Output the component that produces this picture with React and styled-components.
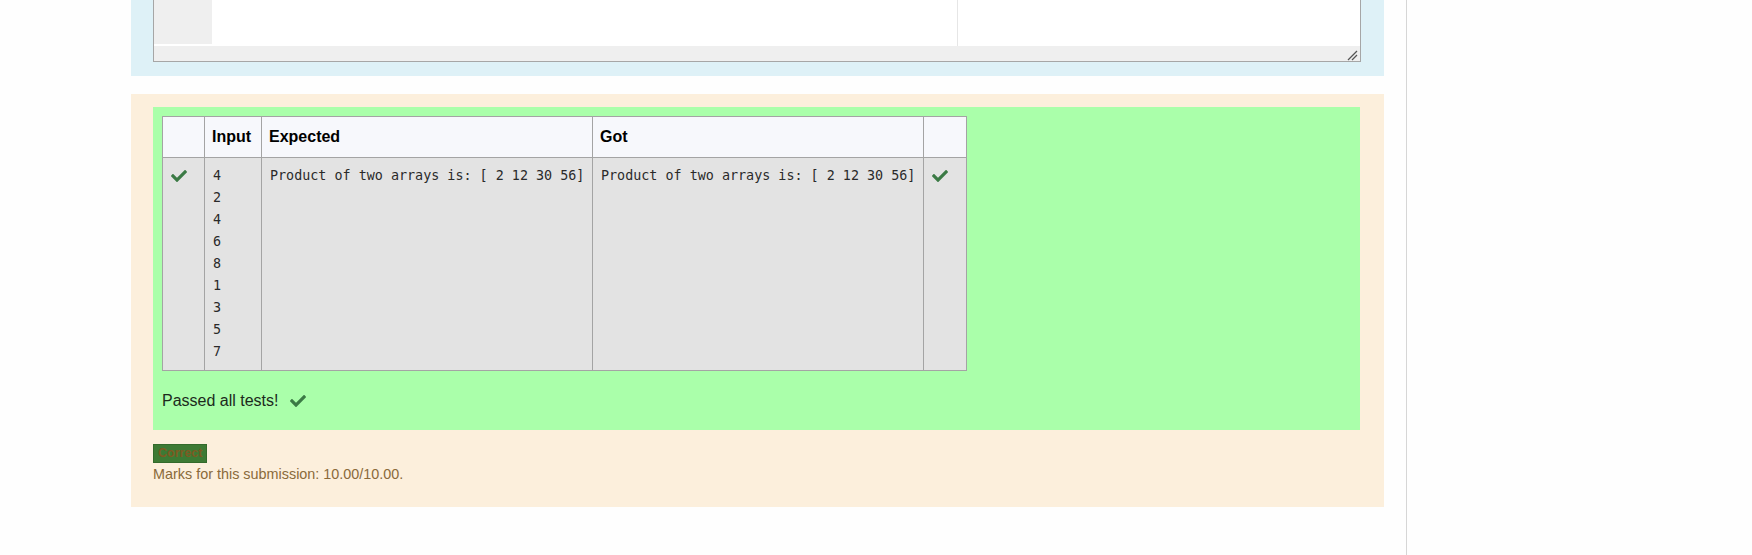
import React from 'react';
import styled, { createGlobalStyle } from 'styled-components';
import { FaCheck } from 'react-icons/fa';

const Global = createGlobalStyle`
  html, body {
    margin: 0;
    padding: 0;
    background: #fefefe;
    font-family: "Liberation Sans", Arial, sans-serif;
  }
`;

const Page = styled.div`
  display: flex;
  min-height: 555px;
  padding-left: 131px;
`;

const Main = styled.div`
  width: 1253px;
  flex-shrink: 0;
`;

const Sidebar = styled.div`
  margin-left: 22px;
  flex: 1;
  border-left: 1px solid #d6d6d6;
  min-height: 555px;
`;

const AnswerPanel = styled.div`
  background: #def1f7;
  padding: 0 23px 14px 22px;
`;

const Editor = styled.div`
  border: 1px solid #a6a6a6;
  border-top: none;
  background: #ffffff;
`;

const EditorBody = styled.div`
  display: flex;
  height: 46px;
`;

const Gutter = styled.div`
  width: 58px;
  height: 44px;
  background: #efefef;
`;

const Content = styled.div`
  flex: 1;
  display: flex;
`;

const PrintMargin = styled.div`
  width: 745px;
  border-right: 1px solid #e6e6e6;
`;

const ScrollBar = styled.div`
  height: 15px;
  background: #efefef;
  display: flex;
  justify-content: flex-end;
  align-items: flex-end;
  padding-right: 2px;
`;

const FeedbackPanel = styled.div`
  margin-top: 18px;
  background: #fcefdc;
  padding: 13px 24px 23px 22px;
`;

const ResultBox = styled.div`
  background: #aaffaa;
  padding: 9px 9px 17px 9px;
`;

const Table = styled.table`
  border-collapse: collapse;
  table-layout: fixed;
  width: 804px;
`;

const Th = styled.th`
  background: #f7f8fc;
  border: 1px solid #a4a4a4;
  padding: 10px 7px;
  height: 20px;
  line-height: 20px;
  text-align: left;
  font-size: 16px;
  font-weight: 700;
  color: #000;
`;

const Td = styled.td`
  background: #e3e3e3;
  border: 1px solid #a4a4a4;
  padding: 7px 7px 7px 8px;
  vertical-align: top;
  color: #2a2a2a;
  font-family: ${(p) => (p.$mono ? '"DejaVu Sans Mono", "Liberation Mono", monospace' : 'inherit')};
  font-size: 13.4px;
  line-height: 22px;
  white-space: pre;
`;

const Tick = styled(FaCheck)`
  color: #3b7a45;
  width: 16px;
  height: 16px;
  display: block;
  margin-top: 3px;
`;

const Passed = styled.div`
  margin-top: 18px;
  display: flex;
  align-items: center;
  gap: 11px;
  font-size: 16px;
  line-height: 24px;
  color: #1c2a1c;
`;

const InlineTick = styled(FaCheck)`
  color: #3b7a45;
  width: 16px;
  height: 16px;
`;

const Badge = styled.div`
  display: inline-block;
  margin-top: 14px;
  background: #3d7a34;
  border: 1px solid #336a2b;
  color: #7d5a22;
  font-size: 12.5px;
  font-weight: 700;
  line-height: 17px;
  padding: 0 4px;
`;

const Marks = styled.div`
  font-size: 14.4px;
  line-height: 20px;
  color: #8a6a3a;
  margin-top: 1px;
`;

const inputs = ['4', '2', '4', '6', '8', '1', '3', '5', '7'];
const output = 'Product of two arrays is: [ 2 12 30 56]';

const Grip = () => (
  <svg width="12" height="12" viewBox="0 0 12 12">
    <path d="M2 11 L11 2 M6 11 L11 6" stroke="#555" strokeWidth="1.3" />
  </svg>
);

export default function App() {
  return (
    <>
      <Global />
      <Page>
        <Main>
          <AnswerPanel>
            <Editor>
              <EditorBody>
                <Gutter />
                <Content>
                  <PrintMargin />
                </Content>
              </EditorBody>
              <ScrollBar>
                <Grip />
              </ScrollBar>
            </Editor>
          </AnswerPanel>

          <FeedbackPanel>
            <ResultBox>
              <Table>
                <colgroup>
                  <col style={{ width: 42 }} />
                  <col style={{ width: 57 }} />
                  <col style={{ width: 331 }} />
                  <col style={{ width: 331 }} />
                  <col style={{ width: 43 }} />
                </colgroup>
                <thead>
                  <tr>
                    <Th />
                    <Th>Input</Th>
                    <Th>Expected</Th>
                    <Th>Got</Th>
                    <Th />
                  </tr>
                </thead>
                <tbody>
                  <tr>
                    <Td><Tick /></Td>
                    <Td $mono>{inputs.join('\n')}</Td>
                    <Td $mono>{output}</Td>
                    <Td $mono>{output}</Td>
                    <Td><Tick /></Td>
                  </tr>
                </tbody>
              </Table>
              <Passed>
                Passed all tests!
                <InlineTick />
              </Passed>
            </ResultBox>
            <Badge>Correct</Badge>
            <Marks>Marks for this submission: 10.00/10.00.</Marks>
          </FeedbackPanel>
        </Main>
        <Sidebar />
      </Page>
    </>
  );
}
